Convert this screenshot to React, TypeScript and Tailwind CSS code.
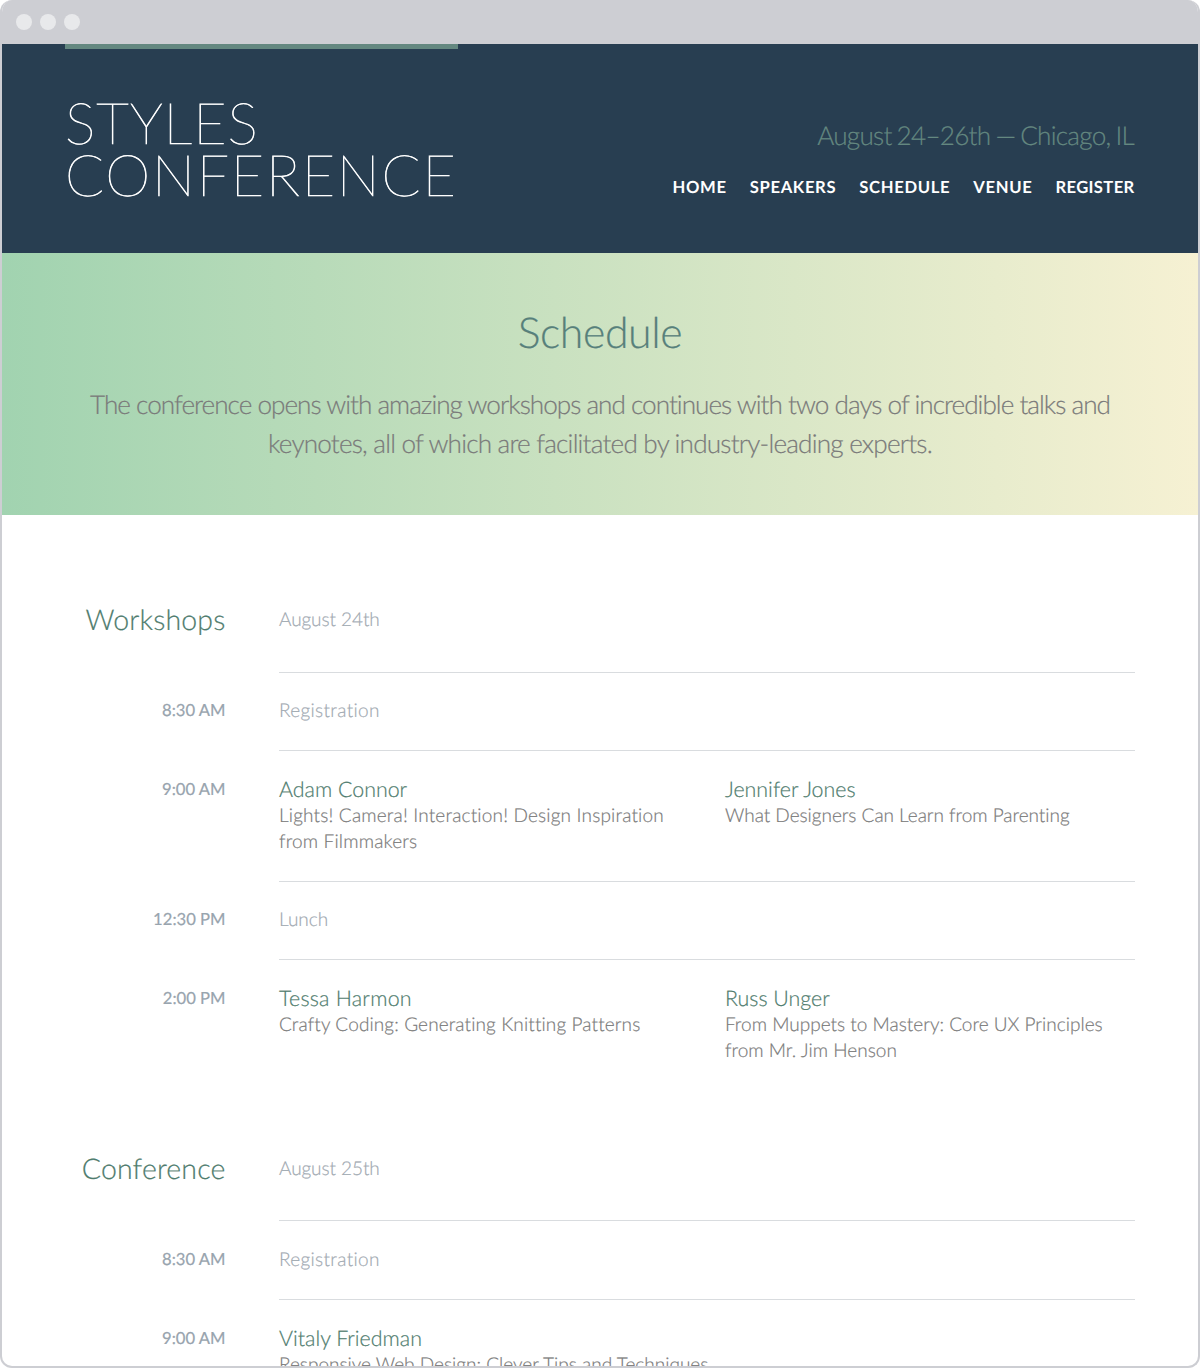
import React from "react";

type Talk = { name: string; title: string; nameTracking?: string; titleTracking?: string };
type Slot = { time: string; note?: string; noteTracking?: string; talks?: Talk[] };
type Day = { title: string; date: string; slots: Slot[] };

const navItems = [
  { label: "Home", tracking: "tracking-[0.65px]" },
  { label: "Speakers", tracking: "tracking-[0.65px]" },
  { label: "Schedule", tracking: "tracking-[0.65px]" },
  { label: "Venue", tracking: "tracking-[0.65px]" },
  { label: "Register", tracking: "tracking-[0.35px]" },
];

const days: Day[] = [
  {
    title: "Workshops",
    date: "August 24th",
    slots: [
      { time: "8:30 AM", note: "Registration", noteTracking: "tracking-[0.33px]" },
      {
        time: "9:00 AM",
        talks: [
          {
            name: "Adam Connor",
            title: "Lights! Camera! Interaction! Design Inspiration from Filmmakers",
            titleTracking: "tracking-[0.17px]",
          },
          {
            name: "Jennifer Jones",
            title: "What Designers Can Learn from Parenting",
            titleTracking: "tracking-[-0.03px]",
          },
        ],
      },
      { time: "12:30 PM", note: "Lunch" },
      {
        time: "2:00 PM",
        talks: [
          {
            name: "Tessa Harmon",
            title: "Crafty Coding: Generating Knitting Patterns",
            nameTracking: "tracking-[0.25px]",
            titleTracking: "tracking-[0.11px]",
          },
          { name: "Russ Unger", title: "From Muppets to Mastery: Core UX Principles from Mr. Jim Henson" },
        ],
      },
    ],
  },
  {
    title: "Conference",
    date: "August 25th",
    slots: [
      { time: "8:30 AM", note: "Registration", noteTracking: "tracking-[0.33px]" },
      {
        time: "9:00 AM",
        talks: [{ name: "Vitaly Friedman", title: "Responsive Web Design: Clever Tips and Techniques" }],
      },
    ],
  },
];

function SlotRow({ slot }: { slot: Slot }) {
  const talks = slot.talks ?? [];
  return (
    <div className="group flex leading-[26.15px] last:-mb-[0.9px]">
      <div className="w-[160.5px] shrink-0 pt-[25.7px] text-right text-[16.64px] font-normal text-[#98a4ae]">
        {slot.time}
      </div>
      <div className="ml-[53.5px] flex flex-1 border-t border-[#d9dcdf] pt-[25.2px] pb-[25.5px] group-last:pb-0">
        {slot.note && <p className={`pt-[0.6px] text-[#9fa9b1] ${slot.noteTracking ?? ""}`}>{slot.note}</p>}
        {talks.map((talk) => (
          <div key={talk.name} className={talks.length > 1 ? "w-[446px] shrink-0 pr-[36px] last:w-[410px] last:pr-0" : "flex-1"}>
            <h4 className={`mb-[0.6px] text-[21.4px] text-[#4f7c6e] ${talk.nameTracking ?? ""}`}>{talk.name}</h4>
            <p className={talk.titleTracking}>{talk.title}</p>
          </div>
        ))}
      </div>
    </div>
  );
}

export default function App() {
  return (
    <div className="flex h-[1368px] w-[1200px] flex-col overflow-hidden rounded-[12px] border-2 border-t-0 border-[#cdced3] bg-white font-['Lato',sans-serif] text-[19.02px] font-light text-[#7a7a7a] [-webkit-text-stroke-width:0.2px] [font-variant-ligatures:none] [text-rendering:geometricPrecision]">
      <div className="flex h-11 shrink-0 items-center gap-2 bg-[#cdced3] pl-3.5">
        <span className="size-4 rounded-full bg-[#e8e9eb]" />
        <span className="size-4 rounded-full bg-[#e8e9eb]" />
        <span className="size-4 rounded-full bg-[#e8e9eb]" />
      </div>

      <header className="flex h-[209px] shrink-0 justify-between bg-[#283e51] px-[63px]">
        <h1 className="w-[392.5px] border-t-[5px] border-[#648880] pt-[48px] text-[57.3px] leading-[52.3px] font-extralight text-white uppercase [-webkit-text-stroke-width:0.7px]">
          <span className="block tracking-[1px]">Styles</span>
          <span className="block tracking-[1.8px]">Conference</span>
        </h1>
        <div className="pt-[72px] text-right">
          <p className="pr-px text-[26.15px] leading-[39px] tracking-[-0.75px] text-[#648880] [word-spacing:-1.4px]">
            August 24–26th — Chicago, IL
          </p>
          <nav className="flex justify-end gap-[23.1px] pt-[19px] pr-[0.4px] text-[16.64px] leading-[26.15px] font-bold text-white uppercase [-webkit-text-stroke-width:0]">
            {navItems.map((item) => (
              <a key={item.label} href="#" className={item.tracking}>
                {item.label}
              </a>
            ))}
          </nav>
        </div>
      </header>

      <section className="h-[261.5px] shrink-0 bg-linear-to-r from-[#a1d3b0] to-[#f6f1d3] px-[63px] pt-[53.7px] text-center">
        <h2 className="text-[42.8px] leading-[52.3px] tracking-[-0.4px] text-[#57807b]">Schedule</h2>
        <p className="pt-[25.7px] text-[26.15px] leading-[39.23px]">
          <span className="block tracking-[-0.99px]">
            The conference opens with amazing workshops and continues with two days of incredible talks and{" "}
          </span>
          <span className="block tracking-[-0.8px]">
            keynotes, all of which are facilitated by industry-leading experts.
          </span>
        </p>
      </section>

      <main className="shrink-0 px-[63px]">
        {days.map((day) => (
          <section key={day.title}>
            <div className="flex h-[157px] items-start pt-[79.2px] leading-[52.3px]">
              <h3 className="w-[160.5px] text-right text-[28.5px] tracking-[0.15px] text-[#4f7c6e]">{day.title}</h3>
              <p className="ml-[53.5px] tracking-[-0.08px] text-[#9fa9b1]">{day.date}</p>
            </div>
            <div className="flex flex-col">
              {day.slots.map((slot) => (
                <SlotRow key={slot.time} slot={slot} />
              ))}
            </div>
          </section>
        ))}
      </main>
    </div>
  );
}
